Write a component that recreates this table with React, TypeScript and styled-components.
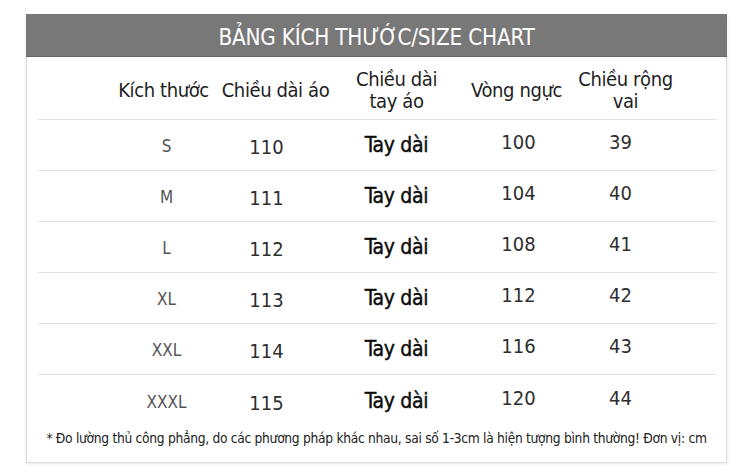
import React from 'react';
import styled, { createGlobalStyle } from 'styled-components';

const GlobalStyle = createGlobalStyle`
  html, body {
    margin: 0;
    padding: 0;
    background: #ffffff;
  }
  body {
    font-family: 'DejaVu Sans', 'Liberation Sans', sans-serif;
    font-stretch: condensed;
  }
`;

interface SizeRow {
  size: string;
  length: number;
  sleeve: string;
  chest: number;
  shoulder: number;
}

const rows: SizeRow[] = [
  { size: 'S', length: 110, sleeve: 'Tay dài', chest: 100, shoulder: 39 },
  { size: 'M', length: 111, sleeve: 'Tay dài', chest: 104, shoulder: 40 },
  { size: 'L', length: 112, sleeve: 'Tay dài', chest: 108, shoulder: 41 },
  { size: 'XL', length: 113, sleeve: 'Tay dài', chest: 112, shoulder: 42 },
  { size: 'XXL', length: 114, sleeve: 'Tay dài', chest: 116, shoulder: 43 },
  { size: 'XXXL', length: 115, sleeve: 'Tay dài', chest: 120, shoulder: 44 }
];

export default function App() {
  return (
    <>
      <GlobalStyle />
      <Page>
        <Card>
          <Banner>BẢNG KÍCH THƯỚC/SIZE CHART</Banner>
          <Table>
            <HeadRow>
              <HeadCell>Kích thước</HeadCell>
              <HeadCell>Chiều dài áo</HeadCell>
              <HeadCell>
                Chiều dài
                <br />
                tay áo
              </HeadCell>
              <HeadCell>Vòng ngực</HeadCell>
              <HeadCell>
                Chiều rộng
                <br />
                vai
              </HeadCell>
            </HeadRow>
            {rows.map((r, i) => (
              <Row key={r.size} last={i === rows.length - 1}>
                <SizeCell>{r.size}</SizeCell>
                <NumCell shift={2}>{r.length}</NumCell>
                <SleeveCell>{r.sleeve}</SleeveCell>
                <NumCell shift={-3}>{r.chest}</NumCell>
                <NumCell shift={-3}>{r.shoulder}</NumCell>
              </Row>
            ))}
          </Table>
          <Note>
            * Đo lường thủ công phẳng, do các phương pháp khác nhau, sai số 1-3cm là hiện tượng bình thường! Đơn vị: cm
          </Note>
        </Card>
      </Page>
    </>
  );
}

const Page = styled.div`
  width: 750px;
  height: 472px;
  padding: 14px 22px 0 26px;
  box-sizing: border-box;
`;

const Card = styled.div`
  width: 701px;
  height: 449px;
  box-sizing: border-box;
  border: 1px solid #dcdcdc;
  border-top: none;
  box-shadow: 0 1px 3px rgba(0, 0, 0, 0.1);
  display: flex;
  flex-direction: column;
  align-items: center;
`;

const Banner = styled.div`
  width: calc(100% + 2px);
  margin: 0 -1px;
  height: 43px;
  background: #787878;
  border-bottom: 1px solid #666;
  box-sizing: border-box;
  color: #ffffff;
  font-size: 22.3px;
  padding-top: 4px;
  display: flex;
  align-items: center;
  justify-content: center;
  letter-spacing: -0.2px;
`;

const Table = styled.div`
  width: 678px;
  display: flex;
  flex-direction: column;
`;

const HeadRow = styled.div`
  display: grid;
  grid-template-columns: 92px 132px 110px 130px 88px;
  padding-left: 80px;
  align-items: center;
  justify-items: center;
  height: 63px;
  border-bottom: 1px solid #e2e2e2;
  box-sizing: border-box;
`;

const HeadCell = styled.div`
  font-size: 20px;
  line-height: 22px;
  color: #1e1e1e;
  text-align: center;
  white-space: nowrap;
  letter-spacing: -0.4px;
  padding-top: 4px;
`;

const Row = styled.div<{ last?: boolean }>`
  display: grid;
  grid-template-columns: 98px 102px 158px 86px 118px;
  padding-left: 80px;
  align-items: center;
  justify-items: center;
  height: 51px;
  box-sizing: border-box;
  border-bottom: ${({ last }) => (last ? 'none' : '1px solid #e2e2e2')};
`;

const SizeCell = styled.div`
  font-size: 17px;
  color: #555555;
  padding-top: 2px;
`;

const NumCell = styled.div<{ shift: number }>`
  font-size: 20px;
  color: #2e2e2e;
  transform: translateY(${({ shift }) => shift}px);
`;

const SleeveCell = styled.div`
  font-size: 21px;
  color: #0c0c0c;
  letter-spacing: -0.3px;
  -webkit-text-stroke: 0.4px #0c0c0c;
`;

const Note = styled.div`
  margin-top: 4px;
  font-size: 13.7px;
  color: #222222;
  letter-spacing: -0.3px;
  white-space: nowrap;
`;
